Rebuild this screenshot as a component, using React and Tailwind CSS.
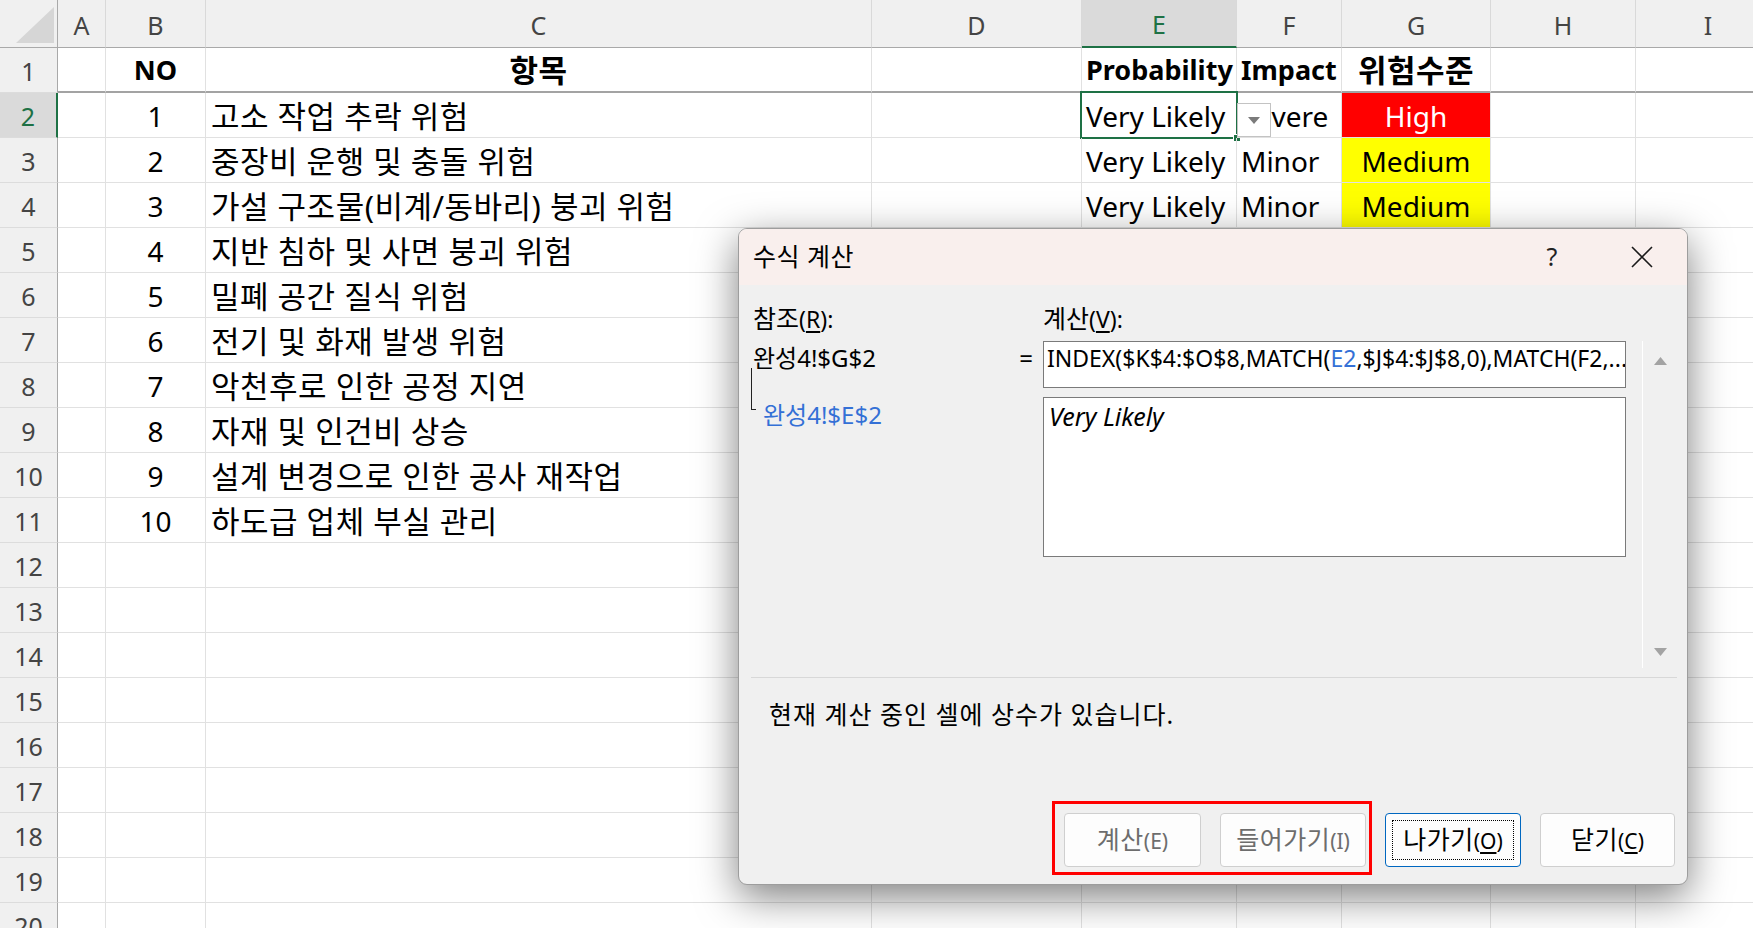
import React from "react";

const COLS = [
  { key: "A", w: "w-[48px]" },
  { key: "B", w: "w-[100px]" },
  { key: "C", w: "w-[666px]" },
  { key: "D", w: "w-[210px]" },
  { key: "E", w: "w-[155px]" },
  { key: "F", w: "w-[105px]" },
  { key: "G", w: "w-[149px]" },
  { key: "H", w: "w-[145px]" },
  { key: "I", w: "w-[145px]" },
];

const ITEMS = [
  "고소 작업 추락 위험",
  "중장비 운행 및 충돌 위험",
  "가설 구조물(비계/동바리) 붕괴 위험",
  "지반 침하 및 사면 붕괴 위험",
  "밀폐 공간 질식 위험",
  "전기 및 화재 발생 위험",
  "악천후로 인한 공정 지연",
  "자재 및 인건비 상승",
  "설계 변경으로 인한 공사 재작업",
  "하도급 업체 부실 관리",
];

const EXTRA = {
  2: { E: "Very Likely", F: "Severe", G: "High" },
  3: { E: "Very Likely", F: "Minor", G: "Medium" },
  4: { E: "Very Likely", F: "Minor", G: "Medium" },
};

function ColumnHeader() {
  return (
    <div className="flex h-[48px]">
      {/* corner */}
      <div className="w-[58px] shrink-0 relative bg-[#f0f0f0] border-r border-b border-[#a9a9a9]">
        <svg className="absolute right-[3px] bottom-[4px]" width="38" height="36" viewBox="0 0 38 36">
          <polygon points="38,0 38,36 0,36" fill="#d6d6d6" />
        </svg>
      </div>
      {COLS.map((c) => {
        const selected = c.key === "E";
        return (
          <div
            key={c.key}
            className={`${c.w} shrink-0 flex items-center justify-center pt-[4px] text-[25px] border-r border-[#d9d9d9] ${
              selected
                ? "bg-[#dadada] text-[#1e7145] border-b-2 border-b-[#1e7145]"
                : "bg-[#f0f0f0] text-[#444] border-b border-b-[#a9a9a9]"
            }`}
          >
            {c.key}
          </div>
        );
      })}
    </div>
  );
}

function Cell({ col, row }) {
  const base = `${col.w} shrink-0 relative flex items-center pt-[2px] border-r border-[#e1e1e1] whitespace-nowrap`;
  const bottom =
    row === 1 ? "border-b-2 border-b-[#a3a3a3]" : "border-b border-b-[#e1e1e1]";
  let content = null;
  let extra = "";

  if (row === 1) {
    extra = "font-bold";
    if (col.key === "B") content = <span className="w-full text-center text-[27px]">NO</span>;
    if (col.key === "C") content = <span className="w-full text-center text-[31px] tracking-[0.5px]">항목</span>;
    if (col.key === "E") content = <span className="pl-[4px] text-[27px]">Probability</span>;
    if (col.key === "F") content = <span className="pl-[4px] text-[27px]">Impact</span>;
    if (col.key === "G") content = <span className="w-full text-center text-[31px] tracking-[0.5px]">위험수준</span>;
  } else if (row <= 11) {
    if (col.key === "B") content = <span className="w-full text-center">{row - 1}</span>;
    if (col.key === "C")
      content = <span className="pl-[5px] text-[31px] tracking-[0.5px]">{ITEMS[row - 2]}</span>;
    const ex = EXTRA[row];
    if (ex) {
      if (col.key === "E") content = <span className="pl-[4px]">{ex.E}</span>;
      if (col.key === "F") content = <span className="pl-[4px]">{ex.F}</span>;
      if (col.key === "G") {
        content = <span className="w-full text-center">{ex.G}</span>;
        extra = ex.G === "High" ? "bg-[#ff0000] text-white" : "bg-[#ffff00]";
      }
    }
  }

  return (
    <div className={`${base} ${bottom} ${extra}`}>
      {content}
      {row === 2 && col.key === "E" && (
        <>
          <div className="absolute left-[-2px] top-[-2px] right-[-2px] bottom-[-2px] border-2 border-[#1e7145] pointer-events-none" />
          <div className="absolute right-[-5px] bottom-[-5px] w-[8px] h-[8px] bg-[#1e7145] border border-white" />
        </>
      )}
      {row === 2 && col.key === "F" && (
        <div className="absolute left-0 top-[10px] w-[34px] h-[34px] bg-white border border-[#c3c3c3] flex items-center justify-center">
          <svg width="12" height="7" viewBox="0 0 12 7">
            <polygon points="0,0 12,0 6,7" fill="#7b7b7b" />
          </svg>
        </div>
      )}
    </div>
  );
}

function Row({ row }) {
  const sel = row === 2;
  return (
    <div className="flex h-[45px]">
      <div
        className={`w-[58px] shrink-0 flex items-center justify-center pt-[3px] text-[25px] border-b border-b-[#dcdcdc] ${
          sel
            ? "bg-[#dadada] text-[#1e7145] border-r-2 border-r-[#1e7145]"
            : "bg-[#f0f0f0] text-[#444] border-r border-r-[#a9a9a9]"
        }`}
      >
        {row}
      </div>
      {COLS.map((c) => (
        <Cell key={c.key} col={c} row={row} />
      ))}
    </div>
  );
}

function Btn({ children, w, disabled, focused }) {
  return (
    <div
      className={`${w} h-[54px] relative flex items-center justify-center rounded-[4px] bg-[#fdfdfd] border ${
        focused ? "border-[#0067c0]" : "border-[#cfcfcf]"
      } ${disabled ? "text-[#6d6d6d]" : "text-black"}`}
    >
      {focused && (
        <div className="absolute left-[6px] right-[6px] top-[6px] bottom-[6px] border border-dotted border-black" />
      )}
      <span className="text-[25px] tracking-[0.5px]">{children}</span>
    </div>
  );
}

function Dialog() {
  return (
    <div className="absolute left-[738px] top-[228px] w-[950px] h-[657px] rounded-[9px] border border-[#9d9d9d] bg-[#f0f0f0] shadow-[0_12px_40px_rgba(0,0,0,0.5)] flex flex-col overflow-hidden text-[25px] text-black">
      {/* title bar */}
      <div className="h-[56px] shrink-0 bg-[#f9efed] flex items-center pl-[14px]">
        <span className="flex-1 tracking-[0.5px]">수식 계산</span>
        <div className="w-[90px] h-full flex items-center justify-center text-[25px] text-[#222]">?</div>
        <div className="w-[90px] h-full flex items-center justify-center">
          <svg width="22" height="22" viewBox="0 0 22 22">
            <path d="M1 1L21 21M21 1L1 21" stroke="#1a1a1a" strokeWidth="1.6" />
          </svg>
        </div>
      </div>

      {/* body */}
      <div className="flex-1 flex flex-col">
        <div className="flex pt-[19px] pl-[14px]">
          {/* reference column */}
          <div className="w-[290px] shrink-0">
            <div className="h-[28px] leading-[28px]">
              참조<span className="text-[23px]">(<span className="underline underline-offset-[3px]">R</span>):</span>
            </div>
            <div className="mt-[9px] pt-[3px] flex justify-between pr-[10px] leading-[28px] text-[24px]">
              <span>완성4!$G$2</span>
              <span>=</span>
            </div>
            <div className="flex items-start ml-[-2px] mt-[-4px]">
              <div className="w-[5px] h-[42px] border-l border-b border-[#222]" />
              <span className="ml-[7px] mt-[33px] leading-[28px] text-[24px] text-[#3470d6]">완성4!$E$2</span>
            </div>
          </div>

          {/* evaluation column */}
          <div className="w-[583px] shrink-0">
            <div className="h-[28px] leading-[28px]">
              계산<span className="text-[23px]">(<span className="underline underline-offset-[3px]">V</span>):</span>
            </div>
            <div className="mt-[9px] h-[47px] bg-white border border-[#7a7a7a] pl-[3px] pt-[2px] leading-[28px] text-[23px] whitespace-nowrap overflow-hidden">
              INDEX($K$4:$O$8,MATCH(<span className="text-[#3470d6]">E2</span>,$J$4:$J$8,0),MATCH(F2,...
            </div>
            <div className="mt-[9px] h-[160px] bg-white border border-[#7a7a7a] pl-[5px] pt-[4px] leading-[28px] text-[25px] italic">
              Very Likely
            </div>
          </div>

          {/* scrollbar */}
          <div className="ml-[16px] mt-[37px] w-[36px] h-[327px] border-l border-white flex flex-col items-center justify-between pt-[16px] pb-[12px]">
            <svg width="13" height="8" viewBox="0 0 13 8">
              <polygon points="0,8 13,8 6.5,0" fill="#a3a3a3" />
            </svg>
            <svg width="13" height="8" viewBox="0 0 13 8">
              <polygon points="0,0 13,0 6.5,8" fill="#a3a3a3" />
            </svg>
          </div>
        </div>

        <div className="mt-[9px] ml-[12px] mr-[10px] h-[1px] bg-[#d8d8d8]" />

        <div className="mt-[22px] pl-[30px] leading-[28px] tracking-[1px]">현재 계산 중인 셀에 상수가 있습니다.</div>

        <div className="mt-auto flex justify-end gap-[19px] pr-[12px] pb-[17px]">
          <Btn w="w-[137px]" disabled>
            계산<span className="text-[21px] tracking-normal">(E)</span>
          </Btn>
          <Btn w="w-[146px]" disabled>
            들어가기<span className="text-[21px] tracking-normal">(I)</span>
          </Btn>
          <Btn w="w-[136px]" focused>
            나가기
            <span className="text-[21px] tracking-normal">
              (<span className="underline underline-offset-[3px]">O</span>)
            </span>
          </Btn>
          <Btn w="w-[135px]">
            닫기
            <span className="text-[21px] tracking-normal">
              (<span className="underline underline-offset-[3px]">C</span>)
            </span>
          </Btn>
        </div>
      </div>

      {/* red annotation box */}
      <div className="absolute left-[313px] top-[572px] w-[320px] h-[74px] border-[3px] border-[#ff0000]" />
    </div>
  );
}

export default function App() {
  const rows = Array.from({ length: 20 }, (_, i) => i + 1);
  return (
    <div className="relative w-[1753px] h-[928px] overflow-hidden bg-white text-black text-[28px] font-['Noto_Sans','Noto_Sans_CJK_KR',sans-serif]">
      <ColumnHeader />
      {rows.map((r) => (
        <Row key={r} row={r} />
      ))}
      <Dialog />
    </div>
  );
}
